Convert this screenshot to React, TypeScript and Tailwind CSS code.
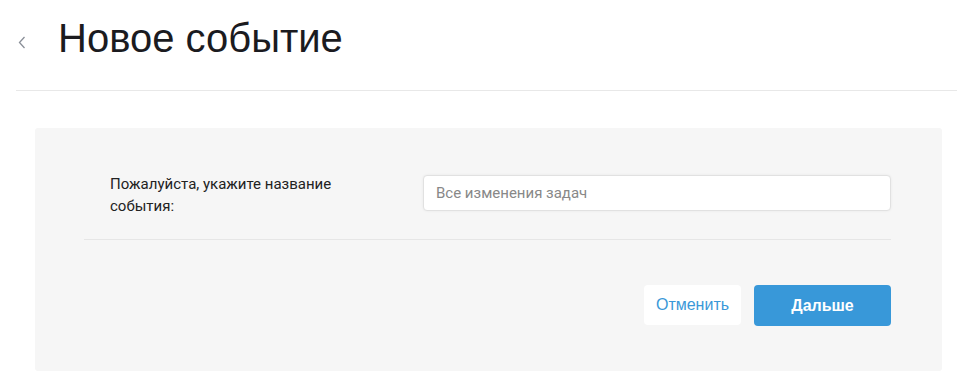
import React, { useState } from 'react';

const App: React.FC = () => {
  const [name, setName] = useState('');

  return (
    <div className="min-h-screen bg-white font-['Liberation_Sans',Arial,sans-serif] text-[#1b1b1f]">
      {/* Шапка */}
      <div className="ml-4 flex h-[91px] items-center border-b border-[#e8e8e8]">
        <button className="-mt-[6px] ml-[1px] flex h-6 w-[10px] items-center justify-center text-[#8a8f98]">
          <svg width="8" height="13" viewBox="0 0 8 13" fill="none">
            <path d="M6.5 1L1.5 6.5l5 5.5" stroke="currentColor" strokeWidth="1.3" />
          </svg>
        </button>
        <h1 className="-mt-[14px] ml-[31px] text-[40px] leading-none font-normal">Новое событие</h1>
      </div>

      {/* Форма */}
      <div className="mr-[15px] ml-[35px] mt-[37px] h-[243px] rounded-[3px] bg-[#f6f6f6] pr-[51px] pl-[49px] pt-[47px]">
        <div className="flex h-[65px] items-start border-b border-[#e6e6e6]">
          <label className="-mt-[2px] w-[339px] shrink-0 pl-[26px] font-['Roboto',sans-serif] text-[15px] leading-[22px] text-[#222]">
            <span className="block max-w-[235px]">Пожалуйста, укажите название события:</span>
          </label>
          <input
            value={name}
            onChange={(e) => setName(e.target.value)}
            placeholder="Все изменения задач"
            className="h-9 min-w-0 flex-1 rounded-[4px] border border-[#e1e1e1] bg-white pl-[12px] pr-3 font-['Roboto',sans-serif] text-[15px] text-[#333] shadow-[0_0_3px_rgba(0,0,0,0.06)] outline-none placeholder:text-[#888]"
          />
        </div>
        <div className="flex justify-end gap-[13px] pt-[45px]">
          <button className="h-10 w-[97px] rounded-[4px] bg-white text-[16px] text-[#3a98d8]">Отменить</button>
          <button className="h-[41px] w-[137px] rounded-[4px] bg-[#3898d9] text-[16px] font-bold text-white">Дальше</button>
        </div>
      </div>
    </div>
  );
};

export default App;
